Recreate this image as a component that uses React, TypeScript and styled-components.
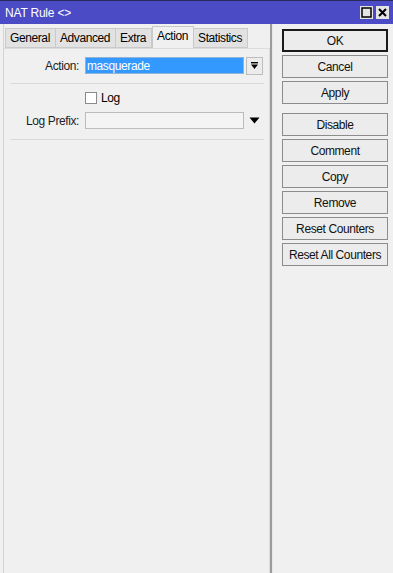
import React from 'react';
import styled, { createGlobalStyle } from 'styled-components';

const GlobalStyle = createGlobalStyle`
  html, body {
    margin: 0;
    padding: 0;
    background: #f0f0f0;
  }
  body {
    font-family: "Liberation Sans", Arial, sans-serif;
    font-size: 12px;
    letter-spacing: -0.4px;
    color: #000;
  }
`;

const Window = styled.div`
  width: 393px;
  height: 573px;
  display: flex;
  flex-direction: column;
  background: #f0f0f0;
  overflow: hidden;
`;

const TitleBar = styled.div`
  height: 23px;
  border-top: 1px solid #2a2a5a;
  background: #4b4bc6;
  color: #fff;
  display: flex;
  align-items: center;
  justify-content: space-between;
  padding: 0 4px 0 5px;
  letter-spacing: -0.2px;
`;

const TitleControls = styled.div`
  display: flex;
  gap: 3px;
`;

const TitleButton = styled.div`
  width: 13px;
  height: 13px;
  background: #e4e4e4;
  display: flex;
  align-items: center;
  justify-content: center;
`;

const Body = styled.div`
  flex: 1;
  display: flex;
`;

const LeftPane = styled.div`
  width: 266px;
  margin-left: 3px;
  border-left: 1px solid #d4d4d4;
  display: flex;
  flex-direction: column;
`;

const TabRow = styled.div`
  display: flex;
  align-items: flex-end;
  height: 24px;
  padding-left: 1px;
`;

const Tab = styled.div<{ $active?: boolean }>`
  height: ${p => (p.$active ? '22px' : '20px')};
  padding: 0 5px ${p => (p.$active ? '3px' : '0')} 4px;
  display: flex;
  align-items: center;
  background: ${p => (p.$active ? '#f0f0f0' : '#e2e2e2')};
  border-top: 1px solid #c9c9c9;
  border-right: 1px solid #c9c9c9;
  border-bottom: ${p => (p.$active ? 'none' : '1px solid #c9c9c9')};
  border-left: ${p => (p.$active ? '1px solid #c9c9c9' : 'none')};
  box-sizing: border-box;
  &:first-child {
    border-left: 1px solid #c9c9c9;
  }
`;

const Panel = styled.div`
  flex: 1;
  border-top: 1px solid #dcdcdc;
  border-right: 1px solid #dcdcdc;
  padding: 8px 3px 0 6px;
  display: flex;
  flex-direction: column;
`;

const Row = styled.div<{ $top?: number }>`
  display: flex;
  align-items: center;
  height: 17px;
  margin-top: ${p => p.$top ?? 0}px;
`;

const Label = styled.div`
  width: 69px;
  text-align: right;
  padding-right: 6px;
  color: #1e1e1e;
`;

const Input = styled.div<{ $selected?: boolean }>`
  width: 159px;
  height: 17px;
  box-sizing: border-box;
  border: 1px solid ${p => (p.$selected ? '#8fb4d8' : '#bcbcbc')};
  background: ${p => (p.$selected ? '#3399ff' : '#f4f4f4')};
  color: ${p => (p.$selected ? '#fff' : '#000')};
  padding: 0 1px;
  display: flex;
  align-items: center;
`;

const DropButton = styled.div`
  width: 17px;
  height: 18px;
  margin-left: 2px;
  box-sizing: border-box;
  border: 1px solid #bdbdbd;
  background: #ececec;
  display: flex;
  align-items: center;
  justify-content: center;
`;

const DropArrow = styled.div`
  width: 17px;
  height: 17px;
  margin-left: 2px;
  display: flex;
  align-items: center;
  justify-content: center;
`;

const Separator = styled.div<{ $top: number }>`
  height: 1px;
  background: #dadada;
  margin: ${p => p.$top}px 2px 0 0;
`;

const CheckRow = styled.div`
  display: flex;
  align-items: center;
  height: 12px;
  margin: 8px 0 0 75px;
  gap: 4px;
`;

const CheckBox = styled.div`
  width: 12px;
  height: 12px;
  box-sizing: border-box;
  border: 1px solid #8a8a8a;
  background: #fff;
`;

const Divider = styled.div`
  width: 2px;
  background: #9c9c9c;
  border-right: 1px solid #e6e6e6;
`;

const RightPane = styled.div`
  flex: 1;
  padding: 5px 0 0 9px;
  display: flex;
  flex-direction: column;
`;

const Button = styled.div<{ $primary?: boolean; $gap?: number }>`
  width: 106px;
  height: 23px;
  box-sizing: border-box;
  border: ${p => (p.$primary ? '2px solid #1a1a1a' : '1px solid #8c8c8c')};
  background: #ececec;
  display: flex;
  align-items: center;
  justify-content: center;
  margin-top: ${p => p.$gap ?? 3}px;
  color: #111;
`;

const tabs = ['General', 'Advanced', 'Extra', 'Action', 'Statistics'];
const buttons = ['Disable', 'Comment', 'Copy', 'Remove', 'Reset Counters', 'Reset All Counters'];

const App: React.FC = () => {
  return (
    <Window>
      <GlobalStyle />
      <TitleBar>
        <span>NAT Rule &lt;&gt;</span>
        <TitleControls>
          <TitleButton>
            <svg width="11" height="11" viewBox="0 0 11 11">
              <rect x="1" y="1" width="9" height="9" fill="none" stroke="#000" strokeWidth="1.5" />
            </svg>
          </TitleButton>
          <TitleButton>
            <svg width="11" height="11" viewBox="0 0 11 11">
              <path d="M2 2 L9 9 M9 2 L2 9" stroke="#000" strokeWidth="2" />
            </svg>
          </TitleButton>
        </TitleControls>
      </TitleBar>
      <Body>
        <LeftPane>
          <TabRow>
            {tabs.map(t => (
              <Tab key={t} $active={t === 'Action'}>{t}</Tab>
            ))}
          </TabRow>
          <Panel>
            <Row>
              <Label>Action:</Label>
              <Input $selected>masquerade</Input>
              <DropButton>
                <svg width="9" height="9" viewBox="0 0 9 9">
                  <rect x="1" y="1" width="7" height="1.4" fill="#000" />
                  <path d="M1 3.5 H8 L4.5 8 Z" fill="#000" />
                </svg>
              </DropButton>
            </Row>
            <Separator $top={9} />
            <CheckRow>
              <CheckBox />
              <span>Log</span>
            </CheckRow>
            <Row $top={8}>
              <Label>Log Prefix:</Label>
              <Input />
              <DropArrow>
                <svg width="11" height="7" viewBox="0 0 11 7">
                  <path d="M0.5 0.5 H10.5 L5.5 6.5 Z" fill="#000" />
                </svg>
              </DropArrow>
            </Row>
            <Separator $top={10} />
          </Panel>
        </LeftPane>
        <Divider />
        <RightPane>
          <Button $primary $gap={0}>OK</Button>
          <Button>Cancel</Button>
          <Button>Apply</Button>
          {buttons.map((b, i) => (
            <Button key={b} $gap={i === 0 ? 9 : 3}>{b}</Button>
          ))}
        </RightPane>
      </Body>
    </Window>
  );
};

export default App;
